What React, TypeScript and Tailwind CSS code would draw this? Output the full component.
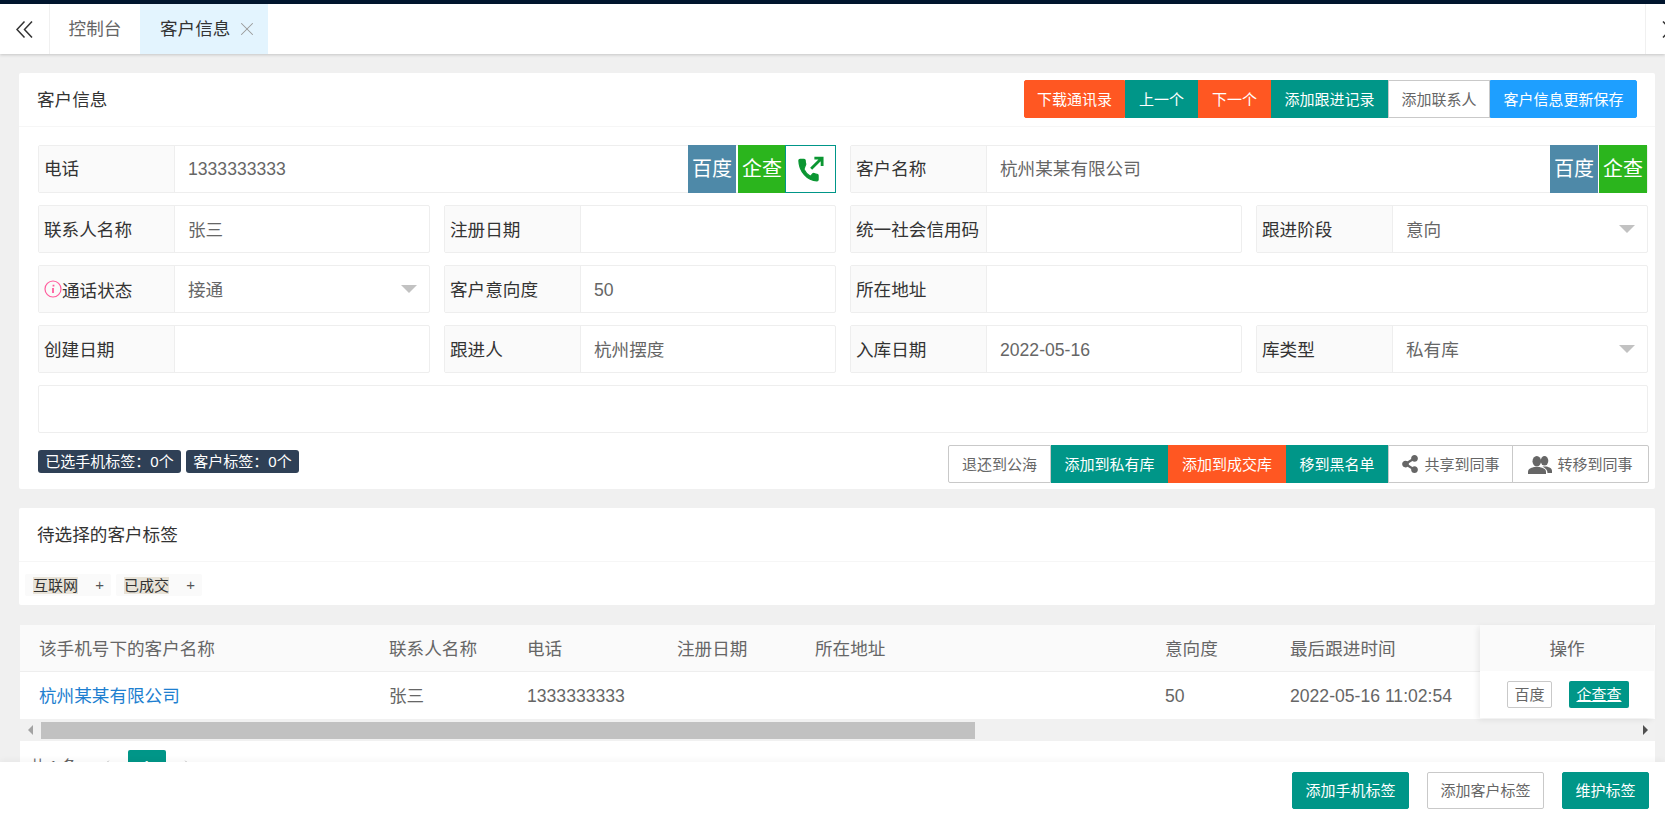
import React from 'react';
import { ChevronLeft, ChevronRight, X } from 'lucide-react';
import { FaShareAlt } from 'react-icons/fa';

const btnBase = 'h-full flex items-center justify-center pt-[2px] text-[15px] border shrink-0';
const teal = 'bg-[#009688] border-[#009688] text-white';
const orange = 'bg-[#ff5722] border-[#ff5722] text-white';
const blue = 'bg-[#1e9fff] border-[#1e9fff] text-white';
const outline = 'bg-white border-[#c9c9c9] text-[#666]';

const PhoneIcon = () => (
  <svg className="w-[31px] h-[31px]" viewBox="0 0 24 24" fill="none">
    <path
      fill="#0b9632"
      stroke="#0b9632"
      strokeWidth="0.9"
      strokeLinejoin="round"
      d="M6.9 11.8c1.2 2.500 2.800 4.200 5 5.500l1.900-2c.3-.3.6-.3 1-.2.8.3 1.500.5 2.300.6.5.1.8.4.8.9v3.300c0 .5-.4.9-.9.9C9.500 20.800 3 13.300 3 5.100c0-.5.4-.9.9-.9h3.100c.5 0 .9.4.9.9 0 .9.1 1.700.4 2.500.1.400 0 .7-.2 1l-1.200 3.200z"
    />
    <path stroke="#0b9632" strokeWidth="2.200" d="M12.500 11.500L20.500 3.500M15 3.200h6v6" />
  </svg>
);

const InfoIcon = () => (
  <svg className="w-[18px] h-[18px] shrink-0" viewBox="0 0 18 18" fill="none">
    <circle cx="9" cy="9" r="8" stroke="#ff5c9d" strokeWidth="1.200" />
    <path stroke="#ff5c9d" strokeWidth="1.800" d="M9.500 4.800v1.600M9 8v5" />
  </svg>
);

const DoubleChevron = ({ flip }: { flip?: boolean }) => (
  <svg className={`w-[17px] h-[17px] shrink-0 ${flip ? 'rotate-180' : ''}`} viewBox="0 0 17 17" fill="none" stroke="#333" strokeWidth="1.500">
    <path d="M8.500 0.500L1 8.500L8.500 16.500M16 0.500L8.500 8.500L16 16.500" />
  </svg>
);

const UsersIcon = () => (
  <svg className="w-[24px] h-[18px] shrink-0" viewBox="0 0 24 18" fill="#666">
    <ellipse cx="16.500" cy="4.800" rx="3.800" ry="4.800" />
    <path d="M14.500 10.500h4c3 .8 5.500 1.800 5.500 4.500v2h-4.500c0-3-1.500-4.500-5-6.500z" />
    <ellipse cx="8.800" cy="5.300" rx="4.300" ry="5.300" />
    <path d="M6 11h5.600c3.600 1 6.400 2 6.400 5v2H0v-2c0-3 2.500-4 6-5z" />
  </svg>
);

const Field = ({ label, value, select, className = '', icon }: { label: string; value?: string; select?: boolean; className?: string; icon?: boolean }) => (
  <div className={`h-[48px] flex border border-[#eee] rounded-[2px] min-w-0 ${className}`}>
    <div className="w-[136px] shrink-0 bg-[#fafafa] border-r border-[#eee] flex items-center pl-[5px] text-[#333]">
      {icon && <InfoIcon />}
      <span className={icon ? 'pt-[5px]' : 'pt-[2px]'}>{label}</span>
    </div>
    <div className="flex-1 flex items-center pl-[13px] text-[#666]">
      <span className="pt-[2px]">{value}</span>
      {select && <span className="ml-auto mr-[12px] w-0 h-0 border-x-[8px] border-x-transparent border-t-[8px] border-t-[#c2c2c2]" />}
    </div>
  </div>
);

const SearchLinks = ({ gap }: { gap: string }) => (
  <>
    <span className="w-[48px] shrink-0 h-[48px] -my-px bg-[#4e89a8] text-white text-[20px] flex items-center justify-center">百度</span>
    <span className={`w-[48px] shrink-0 h-[48px] -my-px ${gap} bg-[#2bb51d] text-white text-[20px] flex items-center justify-center`}>企查</span>
  </>
);

const Tag = ({ text }: { text: string }) => (
  <div className="flex h-[22px] bg-[#fafafa] rounded-[2px] text-[15px] text-[#333] items-center">
    <span className="ml-[8px] bg-[#e8e3d8] leading-[17px]">{text}</span>
    <span className="w-[33px] pl-[10px] text-center text-[#555]">+</span>
  </div>
);

const columns = [
  { w: 'w-[350px]', head: '该手机号下的客户名称', cell: '杭州某某有限公司', link: true },
  { w: 'w-[138px]', head: '联系人名称', cell: '张三' },
  { w: 'w-[150px]', head: '电话', cell: '1333333333' },
  { w: 'w-[138px]', head: '注册日期', cell: '' },
  { w: 'w-[350px]', head: '所在地址', cell: '' },
  { w: 'w-[125px]', head: '意向度', cell: '50' },
  { w: 'w-[209px]', head: '最后跟进时间', cell: '2022-05-16 11:02:54' },
];

export default function App() {
  return (
    <div className="h-[814px] w-full overflow-hidden flex flex-col bg-[#f0f0f0] text-[17.6px] font-['Liberation_Sans','Noto_Sans_CJK_SC',sans-serif]">
      <div className="h-[4px] bg-[#00152e] shrink-0" />

      {/* Tabs */}
      <div className="h-[50px] shrink-0 bg-white flex overflow-hidden shadow-[0_1px_3px_rgba(0,0,0,0.18)] relative z-10">
        <div className="w-[50px] shrink-0 border-r border-[#f0f0f0] flex items-center pl-[16px]">
          <DoubleChevron />
        </div>
        <div className="w-[90px] shrink-0 flex items-center justify-center text-[#666]">控制台</div>
        <div className="w-[128px] shrink-0 bg-[#e3f4fe] flex items-center pl-[20px] text-[#333]">
          客户信息
          <X size={22} strokeWidth={1.1} className="ml-[6px] text-[#999]" />
        </div>
        <div className="w-[1377px] shrink-0" />
        <div className="w-[50px] shrink-0 border-l border-[#f0f0f0] flex items-center pl-[16px]">
          <DoubleChevron flip />
        </div>
      </div>

      <main className="flex-1 min-h-0 overflow-hidden pt-[19px] pl-[19px] pr-[10px] flex flex-col">
        {/* Customer form */}
        <section className="bg-white rounded-[2px] shrink-0">
          <div className="h-[54px] border-b border-[#f6f6f6] flex items-start justify-between pt-[7px] pl-[18px] pr-[18px] text-[#333]">
            <span className="pt-[7px]">客户信息</span>
            <div className="flex h-[38px]">
              <a className={`${btnBase} ${orange} w-[101px] rounded-l-[2px]`}>下载通讯录</a>
              <a className={`${btnBase} ${teal} w-[73px]`}>上一个</a>
              <a className={`${btnBase} ${orange} w-[73px]`}>下一个</a>
              <a className={`${btnBase} ${teal} w-[117px]`}>添加跟进记录</a>
              <a className={`${btnBase} ${outline} w-[102px]`}>添加联系人</a>
              <a className={`${btnBase} ${blue} w-[147px] rounded-r-[2px]`}>客户信息更新保存</a>
            </div>
          </div>

          <div className="pt-[18px] pl-[19px] pr-[7px] pb-[6px]">
            <div className="grid grid-cols-4 gap-x-[14px] gap-y-[12px]">
              <div className="col-span-2 h-[48px] flex border border-[#eee] rounded-[2px]">
                <div className="w-[136px] shrink-0 bg-[#fafafa] border-r border-[#eee] flex items-center pl-[5px] text-[#333]">
                  <span className="pt-px">电话</span>
                </div>
                <div className="flex-1 flex items-center pl-[13px] text-[#666]">
                  <span className="pt-px">1333333333</span>
                </div>
                <SearchLinks gap="ml-[2px]" />
                <span className="w-[51px] shrink-0 h-[48px] -my-px -mr-px -ml-px bg-white border border-[#009688] relative flex items-center justify-center">
                  <PhoneIcon />
                </span>
              </div>
              <div className="col-span-2 h-[48px] flex border border-[#eee] rounded-[2px]">
                <div className="w-[136px] shrink-0 bg-[#fafafa] border-r border-[#eee] flex items-center pl-[5px] text-[#333]">
                  <span className="pt-px">客户名称</span>
                </div>
                <div className="flex-1 flex items-center pl-[13px] text-[#666]">
                  <span className="pt-px">杭州某某有限公司</span>
                </div>
                <SearchLinks gap="ml-px" />
              </div>

              <Field label="联系人名称" value="张三" />
              <Field label="注册日期" />
              <Field label="统一社会信用码" />
              <Field label="跟进阶段" value="意向" select />

              <Field label="通话状态" value="接通" select icon />
              <Field label="客户意向度" value="50" />
              <Field label="所在地址" className="col-span-2" />

              <Field label="创建日期" />
              <Field label="跟进人" value="杭州摆度" />
              <Field label="入库日期" value="2022-05-16" />
              <Field label="库类型" value="私有库" select />

              <div className="col-span-4 h-[48px] border border-[#eee] rounded-[2px]" />
            </div>

            <div className="mt-[12px] flex justify-between">
              <div className="flex gap-[5px] mt-[5px] h-[23px] text-[15px] text-white">
                <span className="w-[143px] pt-px bg-[#2f4056] rounded-[3px] flex items-center justify-center">已选手机标签：0个</span>
                <span className="w-[113px] pt-px bg-[#2f4056] rounded-[3px] flex items-center justify-center">客户标签：0个</span>
              </div>
              <div className="flex h-[38px] -mr-px">
                <a className={`${btnBase} ${outline} w-[103px] rounded-l-[2px]`}>退还到公海</a>
                <a className={`${btnBase} ${teal} w-[117px]`}>添加到私有库</a>
                <a className={`${btnBase} ${orange} w-[118px]`}>添加到成交库</a>
                <a className={`${btnBase} ${teal} w-[102px]`}>移到黑名单</a>
                <a className={`${btnBase} ${outline} w-[125px] gap-[5px]`}>
                  <FaShareAlt size={18} className="text-[#666] -mt-[2px]" />
                  共享到同事
                </a>
                <a className={`${btnBase} ${outline} -ml-px w-[137px] gap-[5px] rounded-r-[2px]`}>
                  <UsersIcon />
                  转移到同事
                </a>
              </div>
            </div>
          </div>
        </section>

        {/* Pending tags */}
        <section className="bg-white rounded-[2px] shrink-0 h-[97px] mt-[19px]">
          <div className="h-[54px] border-b border-[#f6f6f6] flex items-center pl-[18px] text-[#333]">
            <span className="pt-[2px]">待选择的客户标签</span>
          </div>
          <div className="flex gap-[5px] pt-[12px] pl-[6px]">
            <Tag text="互联网" />
            <Tag text="已成交" />
          </div>
        </section>

        {/* Customers under this phone number */}
        <section className="bg-white ml-px mt-[20px] shrink-0">
          <div className="flex">
            <table className="table-fixed w-[1460px] border-collapse">
              <thead>
                <tr className="h-[46px] bg-[#fafafa] border-b border-[#eee]">
                  {columns.map((c) => (
                    <th key={c.head} className={`${c.w} pl-[19px] pt-[2px] text-left font-normal text-[#666]`}>{c.head}</th>
                  ))}
                </tr>
              </thead>
              <tbody>
                <tr className="h-[47px]">
                  {columns.map((c) => (
                    <td key={c.head} className={`pl-[19px] pt-[2px] whitespace-nowrap ${c.link ? 'text-[#1e7fd0]' : 'text-[#666]'}`}>{c.cell}</td>
                  ))}
                </tr>
              </tbody>
            </table>
            <div className="w-[174px] shrink-0 shadow-[-2px_2px_6px_rgba(0,0,0,0.08)] relative">
              <div className="h-[46px] pt-[2px] bg-[#fafafa] flex items-center justify-center text-[#666]">操作</div>
              <div className="h-[47px] flex items-center pl-[27px] gap-[17px] text-[15px]">
                <a className="w-[45px] h-[27px] pt-[2px] border border-[#c9c9c9] rounded-[2px] flex items-center justify-center text-[#666]">百度</a>
                <a className="w-[60px] h-[27px] pt-[2px] bg-[#009688] rounded-[2px] flex items-center justify-center text-white underline">企查查</a>
              </div>
            </div>
          </div>

          <div className="h-[22px] mt-px bg-[#f1f1f1] flex items-center">
            <span className="ml-[8px] w-0 h-0 border-y-[5px] border-y-transparent border-r-[5px] border-r-[#a3a3a3]" />
            <div className="ml-[8px] w-[934px] h-[17px] bg-[#c1c1c1]" />
            <span className="ml-auto mr-[7px] w-0 h-0 border-y-[5px] border-y-transparent border-l-[5px] border-l-[#505050]" />
          </div>

          <div className="h-[60px] pt-[9px] pl-[10px] flex items-start text-[15px] text-[#666]">
            <span className="h-[32px] flex items-center">共 1 条</span>
            <ChevronLeft size={20} strokeWidth={1.2} className="ml-[19px] mt-[6px] text-[#bbb]" />
            <span className="ml-[12px] w-[38px] h-[32px] bg-[#009688] rounded-[2px] text-white flex items-center justify-center">1</span>
            <ChevronRight size={20} strokeWidth={1.2} className="ml-[12px] mt-[6px] text-[#bbb]" />
          </div>
        </section>
      </main>

      {/* Footer actions */}
      <footer className="h-[52px] shrink-0 bg-white relative z-10 shadow-[0_-2px_6px_rgba(0,0,0,0.04)] flex justify-end pt-[10px] pr-[16px]">
        <div className="h-[37px] flex gap-[18px]">
          <a className={`${btnBase} ${teal} w-[117px] rounded-[2px]`}>添加手机标签</a>
          <a className={`${btnBase} ${outline} w-[117px] rounded-[2px]`}>添加客户标签</a>
          <a className={`${btnBase} ${teal} w-[87px] rounded-[2px]`}>维护标签</a>
        </div>
      </footer>
    </div>
  );
}
